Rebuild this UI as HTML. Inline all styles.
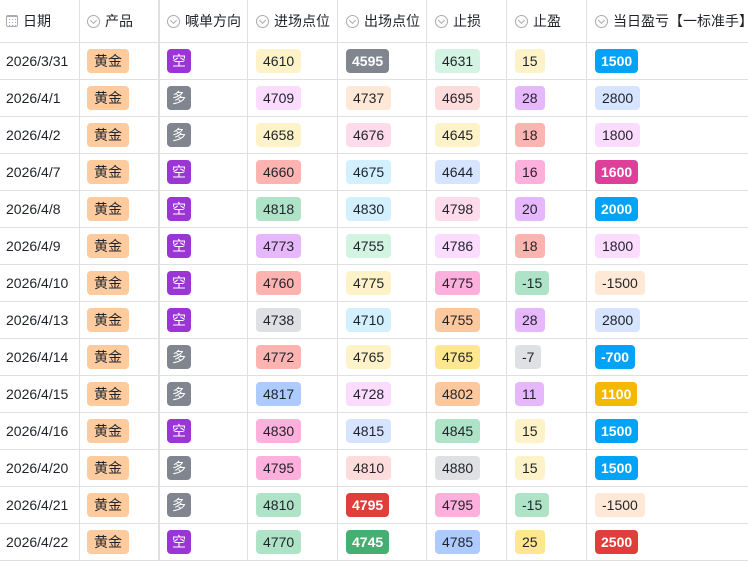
<!DOCTYPE html>
<html><head><meta charset="utf-8"><style>
*{margin:0;padding:0;box-sizing:border-box}
body{width:748px;height:561px;overflow:hidden;background:#fff;font-family:"Liberation Sans","Noto Sans CJK SC",sans-serif;font-size:14px;color:#1f2329}
.r{display:flex;height:37px;border-bottom:1px solid #dedfe1}
.h{height:43px;color:#1f2329}
.c{border-right:1px solid #dedfe1;display:flex;align-items:center;padding-left:7px;flex:none;white-space:nowrap;overflow:hidden}
.c2{border-right:2px solid #dedfe1}
.w0{width:80px;padding-left:6px}.w1{width:80px}.w2{width:88px}.w3{width:90px;padding-left:8px}.w4{width:89px;padding-left:8px}.w5{width:80px;padding-left:8px}.w6{width:80px;padding-left:8px}.w7{width:161px;padding-left:8px;border-right:none}
.t{display:inline-block;height:24px;line-height:24px;padding:0 7px;border-radius:4px;font-size:14px}
.s{color:#fff;font-weight:bold;padding:0 6px}
.i{display:inline-block;flex:none;width:13px;height:13px;border:1px solid #a8abb0;border-radius:50%;margin-right:5px;position:relative}
.i:after{content:"";position:absolute;left:3px;top:2px;width:4px;height:4px;border-right:1px solid #a8abb0;border-bottom:1px solid #a8abb0;transform:rotate(45deg)}
.cal{display:inline-block;flex:none;width:12px;height:12px;border:1px solid #a8abb0;border-radius:2px;margin-right:5px;border-top-width:2px;background:radial-gradient(circle,#a8abb0 0.6px,transparent 0.8px) 1px 1px/3px 3px}
.gold{background:#fdcb9e}.kong{background:#9b35d6;color:#fff}.duo{background:#80858f;color:#fff}
.Y{background:#fef3c8}.pL{background:#fbdcfe}.pe{background:#ffe9d6}.gL{background:#d3f3e3}.rL{background:#ffdcdc}.pu{background:#e6b8fb}.bL{background:#d6e4ff}.pL2{background:#fedbeb}.sa{background:#fdb3b0}.pM{background:#fdb0dc}.cy{background:#d3f0ff}.gM{background:#aee3c7}.gr{background:#dee0e3}.oM{background:#fdc89d}.yM{background:#fee78f}.bM{background:#adcbff}
.GS{background:#80858f}.BS{background:#00a3f5}.MG{background:#de3f98}.GO{background:#f5b800}.RS{background:#e03e3b}.GN{background:#46ae70}
</style></head><body>
<div class="r h">
<div class="c w0"><span class="cal"></span>日期</div>
<div class="c w1 c2"><span class="i"></span>产品</div>
<div class="c w2"><span class="i"></span>喊单方向</div>
<div class="c w3"><span class="i"></span>进场点位</div>
<div class="c w4"><span class="i"></span>出场点位</div>
<div class="c w5"><span class="i"></span>止损</div>
<div class="c w6"><span class="i"></span>止盈</div>
<div class="c w7"><span class="i"></span>当日盈亏【一标准手】</div>
</div>
<div id="rows"></div>
<script>
var d=[
["2026/3/31","空","4610","Y","4595","GS","4631","gL","15","Y","1500","BS"],
["2026/4/1","多","4709","pL","4737","pe","4695","rL","28","pu","2800","bL"],
["2026/4/2","多","4658","Y","4676","pL2","4645","Y","18","sa","1800","pL"],
["2026/4/7","空","4660","sa","4675","cy","4644","bL","16","pM","1600","MG"],
["2026/4/8","空","4818","gM","4830","cy","4798","pL2","20","pu","2000","BS"],
["2026/4/9","空","4773","pu","4755","gL","4786","pL","18","sa","1800","pL"],
["2026/4/10","空","4760","sa","4775","Y","4775","pM","-15","gM","-1500","pe"],
["2026/4/13","空","4738","gr","4710","cy","4755","oM","28","pu","2800","bL"],
["2026/4/14","多","4772","sa","4765","Y","4765","yM","-7","gr","-700","BS"],
["2026/4/15","多","4817","bM","4728","pL","4802","oM","11","pu","1100","GO"],
["2026/4/16","空","4830","pM","4815","bL","4845","gM","15","Y","1500","BS"],
["2026/4/20","多","4795","pM","4810","rL","4880","gr","15","Y","1500","BS"],
["2026/4/21","多","4810","gM","4795","RS","4795","pM","-15","gM","-1500","pe"],
["2026/4/22","空","4770","gM","4745","GN","4785","bM","25","yM","2500","RS"]];
var strong={GS:1,BS:1,MG:1,GO:1,RS:1,GN:1};
function tg(v,c){return '<span class="t '+c+(strong[c]?' s':'')+'">'+v+'</span>';}
var h='';
d.forEach(function(r){
h+='<div class="r"><div class="c w0">'+r[0]+'</div><div class="c w1 c2">'+tg("黄金","gold")+'</div><div class="c w2">'+'<span class="t '+(r[1]=="空"?"kong":"duo")+'" style="padding:0 5px">'+r[1]+'</span></div>'+
'<div class="c w3">'+tg(r[2],r[3])+'</div><div class="c w4">'+tg(r[4],r[5])+'</div><div class="c w5">'+tg(r[6],r[7])+'</div><div class="c w6">'+tg(r[8],r[9])+'</div><div class="c w7">'+tg(r[10],r[11])+'</div></div>';});
document.getElementById('rows').innerHTML=h;
</script>
</body></html>
